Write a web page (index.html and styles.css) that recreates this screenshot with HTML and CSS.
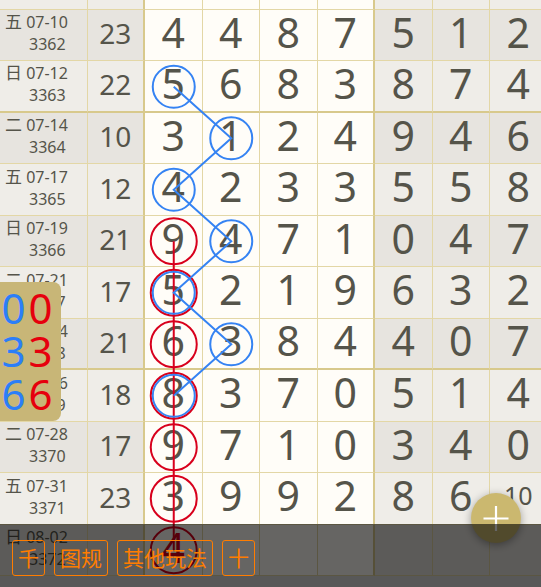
FILE: index.html
```html
<!DOCTYPE html>
<html>
<head>
<meta charset="utf-8">
<link rel="stylesheet" href="styles.css">
</head>
<body>
<div class="screen">
  <div class="table">
    <div class="row light">
      <div class="c-date"><span class="l1"><span class="wd">二</span> 07-07</span><span class="l2">3361</span></div>
      <div class="c-sum">19</div>
      <div class="c-d">6</div><div class="c-d">2</div><div class="c-d">5</div><div class="c-d sep">6</div>
      <div class="c-g">3</div><div class="c-g">2</div><div class="c-g">5</div>
    </div>
    <div class="row dark">
      <div class="c-date"><span class="l1"><span class="wd">五</span> 07-10</span><span class="l2">3362</span></div>
      <div class="c-sum">23</div>
      <div class="c-d">4</div><div class="c-d">4</div><div class="c-d">8</div><div class="c-d sep">7</div>
      <div class="c-g">5</div><div class="c-g">1</div><div class="c-g">2</div>
    </div>
    <div class="row light thick">
      <div class="c-date"><span class="l1"><span class="wd">日</span> 07-12</span><span class="l2">3363</span></div>
      <div class="c-sum">22</div>
      <div class="c-d">5</div><div class="c-d">6</div><div class="c-d">8</div><div class="c-d sep">3</div>
      <div class="c-g">8</div><div class="c-g">7</div><div class="c-g">4</div>
    </div>
    <div class="row dark">
      <div class="c-date"><span class="l1"><span class="wd">二</span> 07-14</span><span class="l2">3364</span></div>
      <div class="c-sum">10</div>
      <div class="c-d">3</div><div class="c-d">1</div><div class="c-d">2</div><div class="c-d sep">4</div>
      <div class="c-g">9</div><div class="c-g">4</div><div class="c-g">6</div>
    </div>
    <div class="row light">
      <div class="c-date"><span class="l1"><span class="wd">五</span> 07-17</span><span class="l2">3365</span></div>
      <div class="c-sum">12</div>
      <div class="c-d">4</div><div class="c-d">2</div><div class="c-d">3</div><div class="c-d sep">3</div>
      <div class="c-g">5</div><div class="c-g">5</div><div class="c-g">8</div>
    </div>
    <div class="row dark">
      <div class="c-date"><span class="l1"><span class="wd">日</span> 07-19</span><span class="l2">3366</span></div>
      <div class="c-sum">21</div>
      <div class="c-d">9</div><div class="c-d">4</div><div class="c-d">7</div><div class="c-d sep">1</div>
      <div class="c-g">0</div><div class="c-g">4</div><div class="c-g">7</div>
    </div>
    <div class="row light">
      <div class="c-date"><span class="l1"><span class="wd">二</span> 07-21</span><span class="l2">3367</span></div>
      <div class="c-sum">17</div>
      <div class="c-d">5</div><div class="c-d">2</div><div class="c-d">1</div><div class="c-d sep">9</div>
      <div class="c-g">6</div><div class="c-g">3</div><div class="c-g">2</div>
    </div>
    <div class="row dark thick">
      <div class="c-date"><span class="l1"><span class="wd">五</span> 07-24</span><span class="l2">3368</span></div>
      <div class="c-sum">21</div>
      <div class="c-d">6</div><div class="c-d">3</div><div class="c-d">8</div><div class="c-d sep">4</div>
      <div class="c-g">4</div><div class="c-g">0</div><div class="c-g">7</div>
    </div>
    <div class="row light">
      <div class="c-date"><span class="l1"><span class="wd">日</span> 07-26</span><span class="l2">3369</span></div>
      <div class="c-sum">18</div>
      <div class="c-d">8</div><div class="c-d">3</div><div class="c-d">7</div><div class="c-d sep">0</div>
      <div class="c-g">5</div><div class="c-g">1</div><div class="c-g">4</div>
    </div>
    <div class="row dark">
      <div class="c-date"><span class="l1"><span class="wd">二</span> 07-28</span><span class="l2">3370</span></div>
      <div class="c-sum">17</div>
      <div class="c-d">9</div><div class="c-d">7</div><div class="c-d">1</div><div class="c-d sep">0</div>
      <div class="c-g">3</div><div class="c-g">4</div><div class="c-g">0</div>
    </div>
    <div class="row light">
      <div class="c-date"><span class="l1"><span class="wd">五</span> 07-31</span><span class="l2">3371</span></div>
      <div class="c-sum">23</div>
      <div class="c-d">3</div><div class="c-d">9</div><div class="c-d">9</div><div class="c-d sep">2</div>
      <div class="c-g">8</div><div class="c-g">6</div><div class="c-g small">10</div>
    </div>
    <div class="row dark">
      <div class="c-date"><span class="l1"><span class="wd">日</span> 08-02</span><span class="l2">3372</span></div>
      <div class="c-sum"></div>
      <div class="c-d red">4</div><div class="c-d"></div><div class="c-d"></div><div class="c-d sep"></div>
      <div class="c-g"></div><div class="c-g"></div><div class="c-g"></div>
    </div>
  </div>

  <svg class="marks" width="541" height="587" viewBox="0 0 541 587">
    <g fill="none" stroke="#d8001c" stroke-width="2">
      <line x1="173.75" y1="241.25" x2="173.75" y2="550.25"/>
      <circle cx="173.75" cy="241.25" r="23"/>
      <circle cx="173.75" cy="292.75" r="23"/>
      <circle cx="173.75" cy="344.25" r="23"/>
      <circle cx="173.75" cy="395.75" r="23"/>
      <circle cx="173.75" cy="447.25" r="23"/>
      <circle cx="173.75" cy="498.75" r="23"/>
      <circle cx="173.75" cy="550.25" r="23"/>
    </g>
    <g fill="none" stroke="#3583f3" stroke-width="2">
      <polyline points="173.75,86.75 231.25,138.25 173.75,189.75 231.25,241.25 173.75,292.75 231.25,344.25 173.75,395.75"/>
      <circle cx="173.75" cy="86.75" r="21"/>
      <circle cx="231.25" cy="138.25" r="21"/>
      <circle cx="173.75" cy="189.75" r="21"/>
      <circle cx="231.25" cy="241.25" r="21"/>
      <circle cx="173.75" cy="292.75" r="21"/>
      <circle cx="231.25" cy="344.25" r="21"/>
      <circle cx="173.75" cy="395.75" r="21"/>
    </g>
  </svg>

  <div class="side-panel">
    <div class="pair"><span class="b">0</span><span class="r">0</span></div>
    <div class="pair"><span class="b">3</span><span class="r">3</span></div>
    <div class="pair"><span class="b">6</span><span class="r">6</span></div>
  </div>

  <div class="fab">
    <svg width="50" height="50" viewBox="0 0 50 50">
      <path d="M12.5 25.5 H37.5 M25 13 V38" stroke="#ffffff" stroke-width="2.2" fill="none"/>
    </svg>
  </div>

  <div class="toolbar">
    <div class="btn">千</div>
    <div class="btn">图规</div>
    <div class="btn">其他玩法</div>
    <div class="btn">十</div>
  </div>
</div>
</body>
</html>
```

FILE: styles.css
```css
html, body {
  margin: 0;
  padding: 0;
  background: #dcdcdc;
}
.screen {
  position: relative;
  width: 541px;
  height: 587px;
  overflow: hidden;
  font-family: "Noto Sans", "Noto Sans CJK SC", sans-serif;
  color: #55544a;
}
.table {
  margin-top: -42px;
  width: 548px;
}
.row {
  display: grid;
  grid-template-columns: 87.5px 57.5px repeat(7, 57.5px);
  height: 51.5px;
}
.row > div {
  box-sizing: border-box;
  border-right: 1px solid #e3d7a6;
  border-bottom: 1px solid #e3d7a6;
}
.row.thick > div {
  border-bottom: 2px solid #d8c98c;
}
.dark .c-date, .dark .c-sum, .dark .c-g { background: #e7e4df; }
.light .c-date, .light .c-sum, .light .c-g { background: #efede8; }
.c-d { background: #fffdf8; }

.c-date {
  display: flex;
  flex-direction: column;
  justify-content: center;
  padding-bottom: 4px;
  font-size: 16px;
  line-height: 22px;
}
.c-date .wd {
  font-family: "Noto Sans CJK SC", sans-serif;
  font-size: 17px;
}
.l1 { padding-left: 5px; white-space: nowrap; }
.l2 { padding-left: 29px; }

.c-sum {
  border-right: 2px solid #d8c98c !important;
  display: flex;
  align-items: center;
  justify-content: center;
  font-size: 28px;
  padding-bottom: 3px;
}
.c-d, .c-g {
  display: flex;
  align-items: center;
  justify-content: center;
  font-size: 41px;
  line-height: 1;
  padding-bottom: 5px;
}
.c-d.sep { border-right: 2px solid #d8c98c; }
.c-g.small { font-size: 25px; padding-bottom: 6px; }
.c-d.red { color: #d8001c; }

.marks {
  position: absolute;
  left: 0;
  top: 0;
}

.side-panel {
  position: absolute;
  left: -8px;
  top: 282px;
  width: 69px;
  height: 139px;
  box-sizing: border-box;
  padding: 4px 0 0 8px;
  background: #c8b677;
  border-radius: 8px;
  font-size: 42px;
  line-height: 43px;
}
.pair { display: flex; }
.pair span { width: 27px; text-align: center; }
.pair .b { color: #2c7ef8; }
.pair .r { color: #e6000d; }

.fab {
  position: absolute;
  left: 470.5px;
  top: 492.5px;
  width: 50px;
  height: 50px;
  border-radius: 50%;
  background: #cbb86f;
  box-shadow: 0 2px 8px rgba(0, 0, 0, 0.35);
}
.fab svg { display: block; }

.toolbar {
  position: absolute;
  left: 0;
  right: 0;
  bottom: 0;
  height: 63px;
  box-sizing: border-box;
  padding: 16px 0 0 12px;
  background: rgba(0, 0, 0, 0.6);
  display: flex;
  align-items: flex-start;
  gap: 9px;
}
.btn {
  height: 36px;
  box-sizing: border-box;
  border: 1px solid #ff7d00;
  border-radius: 3px;
  padding: 0 5px;
  color: #ff7d00;
  font-family: "Noto Sans CJK SC", sans-serif;
  font-size: 21px;
  line-height: 33px;
}
```
